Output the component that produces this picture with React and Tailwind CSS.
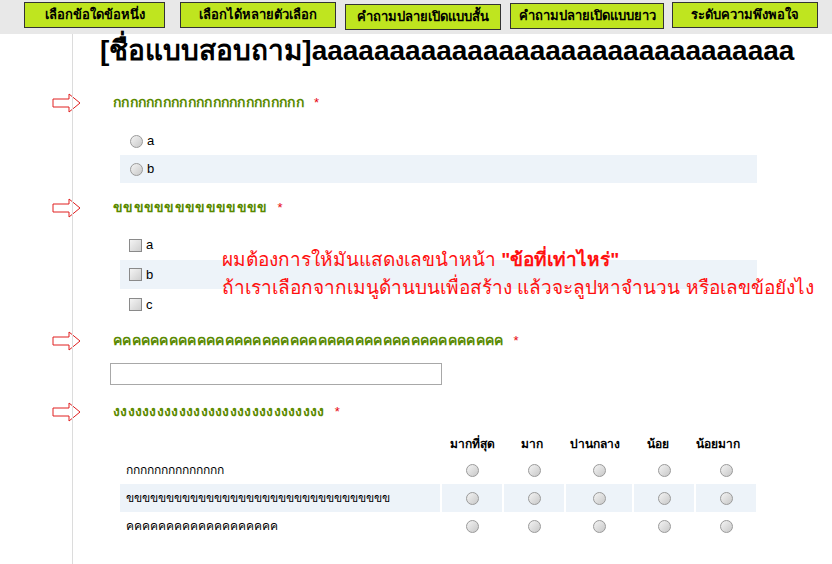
const Arrow = () => (
  <svg width="30" height="20" viewBox="0 0 30 20" className="shrink-0">
    <path d="M1 6 H17 V1 L28 10 L17 19 V14 H1 Z" fill="white" stroke="#e02020" strokeWidth="1" />
  </svg>
);
const Radio = () => (
  <span className="inline-block w-[13px] h-[13px] rounded-full border border-[#9a9a9a] bg-gradient-to-br from-[#f4f4f4] to-[#c8c8c8]" />
);
const Check = () => (
  <span className="inline-block w-[13px] h-[13px] border border-[#8a8a8a] bg-gradient-to-br from-[#f4f4f4] to-[#cfcfcf]" />
);
const btn = "bg-[#bfe51f] border border-[#333] text-[13px] font-bold text-black flex items-center justify-center h-[26px]";
const cols = ["มากที่สุด", "มาก", "ปานกลาง", "น้อย", "น้อยมาก"];
const colW = ["w-[60px]", "w-[60px]", "w-[66px]", "w-[60px]", "w-[60px]"];

function Label({ children, mt }) {
  return (
    <div className={`flex items-center ${mt}`}>
      <div className="w-[113px] flex pl-[52px]"><Arrow /></div>
      <span className="text-[#5a8a00] font-bold text-[14px] tracking-[0.3px]">{children}</span>
      <span className="text-red-600 text-[13px] ml-[10px]">*</span>
    </div>
  );
}

export default function App() {
  return (
    <div className="w-[832px] h-[564px] overflow-hidden bg-white relative" style={{ fontFamily: '"Liberation Sans","Noto Sans",sans-serif' }}>
      <div className="h-[34px] bg-[#e8e8e8] flex items-start pt-[2px] pl-[24px]">
        <div className={`${btn} w-[141px]`}>เลือกข้อใดข้อหนึ่ง</div>
        <div className={`${btn} w-[156px] ml-[15px]`}>เลือกได้หลายตัวเลือก</div>
        <div className={`${btn} w-[156px] ml-[9px] mt-[2px]`}>คำถามปลายเปิดแบบสั้น</div>
        <div className={`${btn} w-[154px] ml-[9px] mt-[1px]`}>คำถามปลายเปิดแบบยาว</div>
        <div className={`${btn} w-[146px] ml-[8px]`}>ระดับความพึงพอใจ</div>
      </div>
      <div className="absolute left-[72px] top-[34px] bottom-0 w-px bg-[#dcdcdc]" />
      <div className="pl-[100px] text-[28px] font-bold text-black leading-[34px] whitespace-nowrap">[ชื่อแบบสอบถาม]aaaaaaaaaaaaaaaaaaaaaaaaaaaaaaa</div>

      <Label mt="mt-[24px]">กกกกกกกกกกกกกกกกกกกกกกก</Label>
      <div className="ml-[120px] w-[637px] mt-[14px] text-[13px]">
        <div className="h-[28px] flex items-center gap-[4px] pl-[10px]"><Radio />a</div>
        <div className="h-[28px] flex items-center gap-[4px] pl-[10px] bg-[#edf3f9]"><Radio />b</div>
      </div>

      <Label mt="mt-[14px]">ขขขขขขขขขขขขขขข</Label>
      <div className="ml-[120px] w-[637px] mt-[12px] text-[13px]">
        <div className="h-[30px] flex items-center gap-[4px] pl-[9px]"><Check />a</div>
        <div className="h-[29px] flex items-center gap-[4px] pl-[9px] bg-[#edf3f9]"><Check />b</div>
        <div className="h-[31px] flex items-center gap-[4px] pl-[9px]"><Check />c</div>
      </div>

      <Label mt="mt-[10px]">คคคคคคคคคคคคคคคคคคคคคคคคคคคคคคคคคคคคคคคคคค</Label>
      <div className="ml-[110px] mt-[12px] w-[332px] h-[22px] border border-[#a8a8a8]" />

      <Label mt="mt-[16px]">งงงงงงงงงงงงงงงงงงงงงงงงงงงงง</Label>
      <div className="ml-[120px] mt-[10px] text-[12px] text-black">
        <div className="flex h-[24px] items-center font-bold">
          <div className="w-[322px]" />
          {cols.map((c, i) => <div key={c} className={`${colW[i]} text-center`}>{c}</div>)}
        </div>
        {["กกกกกกกกกกกกกก", "ขขขขขขขขขขขขขขขขขขขขขขขขขขขขขขขขข", "คคคคคคคคคคคคคคคคคคค"].map((r, ri) => (
          <div key={r} className="flex h-[28px] gap-[2px]">
            <div className={`w-[320px] flex items-center pl-[6px] ${ri === 1 ? "bg-[#edf3f9]" : ""}`}>{r}</div>
            {cols.map((c, i) => (
              <div key={c} className={`${colW[i]} flex items-center justify-center ${ri === 1 ? "bg-[#edf3f9]" : ""}`}><Radio /></div>
            ))}
          </div>
        ))}
      </div>

      <div className="absolute left-[222px] top-[246px] text-[#ff1010] text-[19px] leading-[28px] whitespace-nowrap">
        <div>ผมต้องการให้มันแสดงเลขนำหน้า <b>"ข้อที่เท่าไหร่"</b></div>
        <div>ถ้าเราเลือกจากเมนูด้านบนเพื่อสร้าง แล้วจะลูปหาจำนวน หรือเลขข้อยังไง</div>
      </div>
    </div>
  );
}
